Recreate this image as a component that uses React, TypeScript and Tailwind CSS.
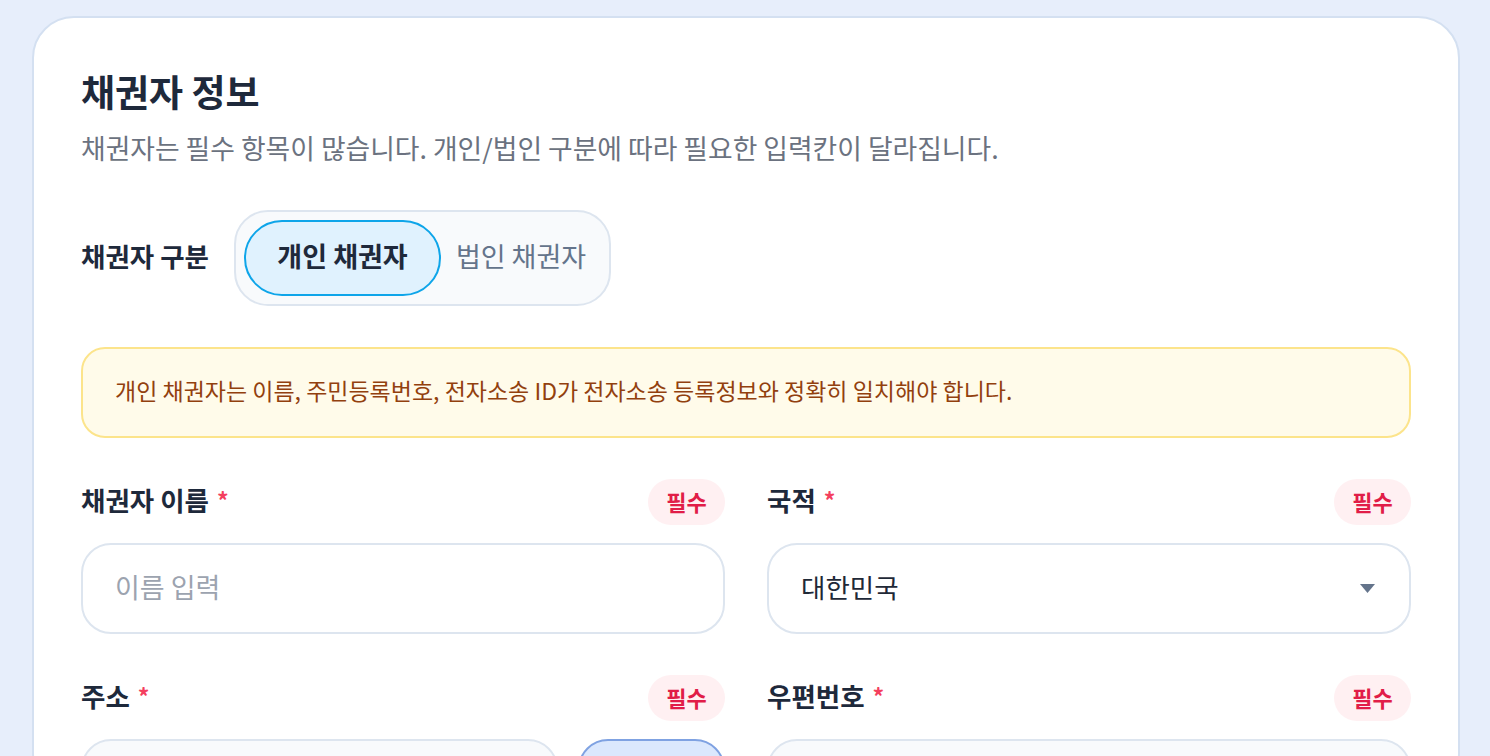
import React from "react";

const font = { fontFamily: '"Noto Sans CJK KR", "Noto Sans", sans-serif' };

function Badge() {
  return (
    <span className="flex h-[46px] w-[77px] items-center justify-center rounded-full bg-[#fff0f2] pb-[2px] text-[22px] font-bold text-[#e11d48]">
      필수
    </span>
  );
}

function FieldLabel({ text }: { text: string }) {
  return (
    <div className="flex h-[46px] items-center justify-between">
      <span className="flex items-center pb-[4px] text-[26.5px] font-bold leading-none text-[#1e293b]">
        {text}
        <span className="ml-[8px] text-[23px] text-[#f43f5e]">*</span>
      </span>
      <Badge />
    </div>
  );
}

export default function App() {
  return (
    <div
      className="min-h-[756px] w-full bg-[#e7eefb] pl-[32px] pr-[30px] pt-[16px]"
      style={font}
    >
      <div className="h-[780px] rounded-[42px] border-2 border-[#d4e0f1] bg-white px-[47px] pt-[51px]">
        <h1 className="text-[37px] font-bold leading-[44px] text-[#1e293b]">채권자 정보</h1>
        <p className="mt-[19px] text-[26.8px] leading-[32px] text-[#6b7280]">
          채권자는 필수 항목이 많습니다. 개인/법인 구분에 따라 필요한 입력칸이 달라집니다.
        </p>

        <div className="mt-[46px] flex items-center">
          <span className="w-[153px] pb-[4px] text-[26.5px] font-bold text-[#1e293b]">채권자 구분</span>
          <div className="flex h-[96px] items-center rounded-[34px] border-2 border-[#dde5ef] bg-[#f8fafc] p-[8px]">
            <button className="flex h-[76px] w-[197px] items-center justify-center rounded-full border-2 border-[#0ea5e9] bg-[#e0f2fe] pb-[3px] text-[27px] font-bold text-[#1e293b]">
              개인 채권자
            </button>
            <button className="flex h-[76px] w-[160px] items-center justify-center rounded-full pb-[3px] text-[27px] text-[#64748b]">
              법인 채권자
            </button>
          </div>
        </div>

        <div className="mt-[41px] flex h-[91px] items-center rounded-[24px] border-2 border-[#fce48b] bg-[#fffbea] px-[32px] pb-[4px] text-[23px] text-[#92400e]">
          개인 채권자는 이름, 주민등록번호, 전자소송 ID가 전자소송 등록정보와 정확히 일치해야 합니다.
        </div>

        <div className="mt-[41px] grid grid-cols-2 gap-x-[42px]">
          <div>
            <FieldLabel text="채권자 이름" />
            <div className="mt-[18px] flex h-[91px] items-center rounded-[30px] border-2 border-[#dde5ef] bg-white px-[32px] pb-[3px] text-[27px] text-[#9ca3af]">
              이름 입력
            </div>
          </div>
          <div>
            <FieldLabel text="국적" />
            <div className="mt-[18px] flex h-[91px] items-center justify-between rounded-[30px] border-2 border-[#dde5ef] bg-white pl-[32px] pr-[34px] text-[26.5px] text-[#1f2937]">
              <span className="pb-[3px]">대한민국</span>
              <svg width="15" height="9" viewBox="0 0 15 9">
                <path d="M0 0 H15 L7.5 9 Z" fill="#64748b" />
              </svg>
            </div>
          </div>

          <div className="mt-[41px]">
            <FieldLabel text="주소" />
            <div className="mt-[18px] flex gap-[20px]">
              <div className="h-[91px] flex-1 rounded-[30px] border-2 border-[#dde5ef] bg-[#f8fafc]" />
              <div className="h-[91px] w-[147px] rounded-[30px] border-2 border-[#7fa2e2] bg-[#dbe8fd]" />
            </div>
          </div>
          <div className="mt-[41px]">
            <FieldLabel text="우편번호" />
            <div className="mt-[18px] h-[91px] rounded-[30px] border-2 border-[#dde5ef] bg-[#f8fafc]" />
          </div>
        </div>
      </div>
    </div>
  );
}
